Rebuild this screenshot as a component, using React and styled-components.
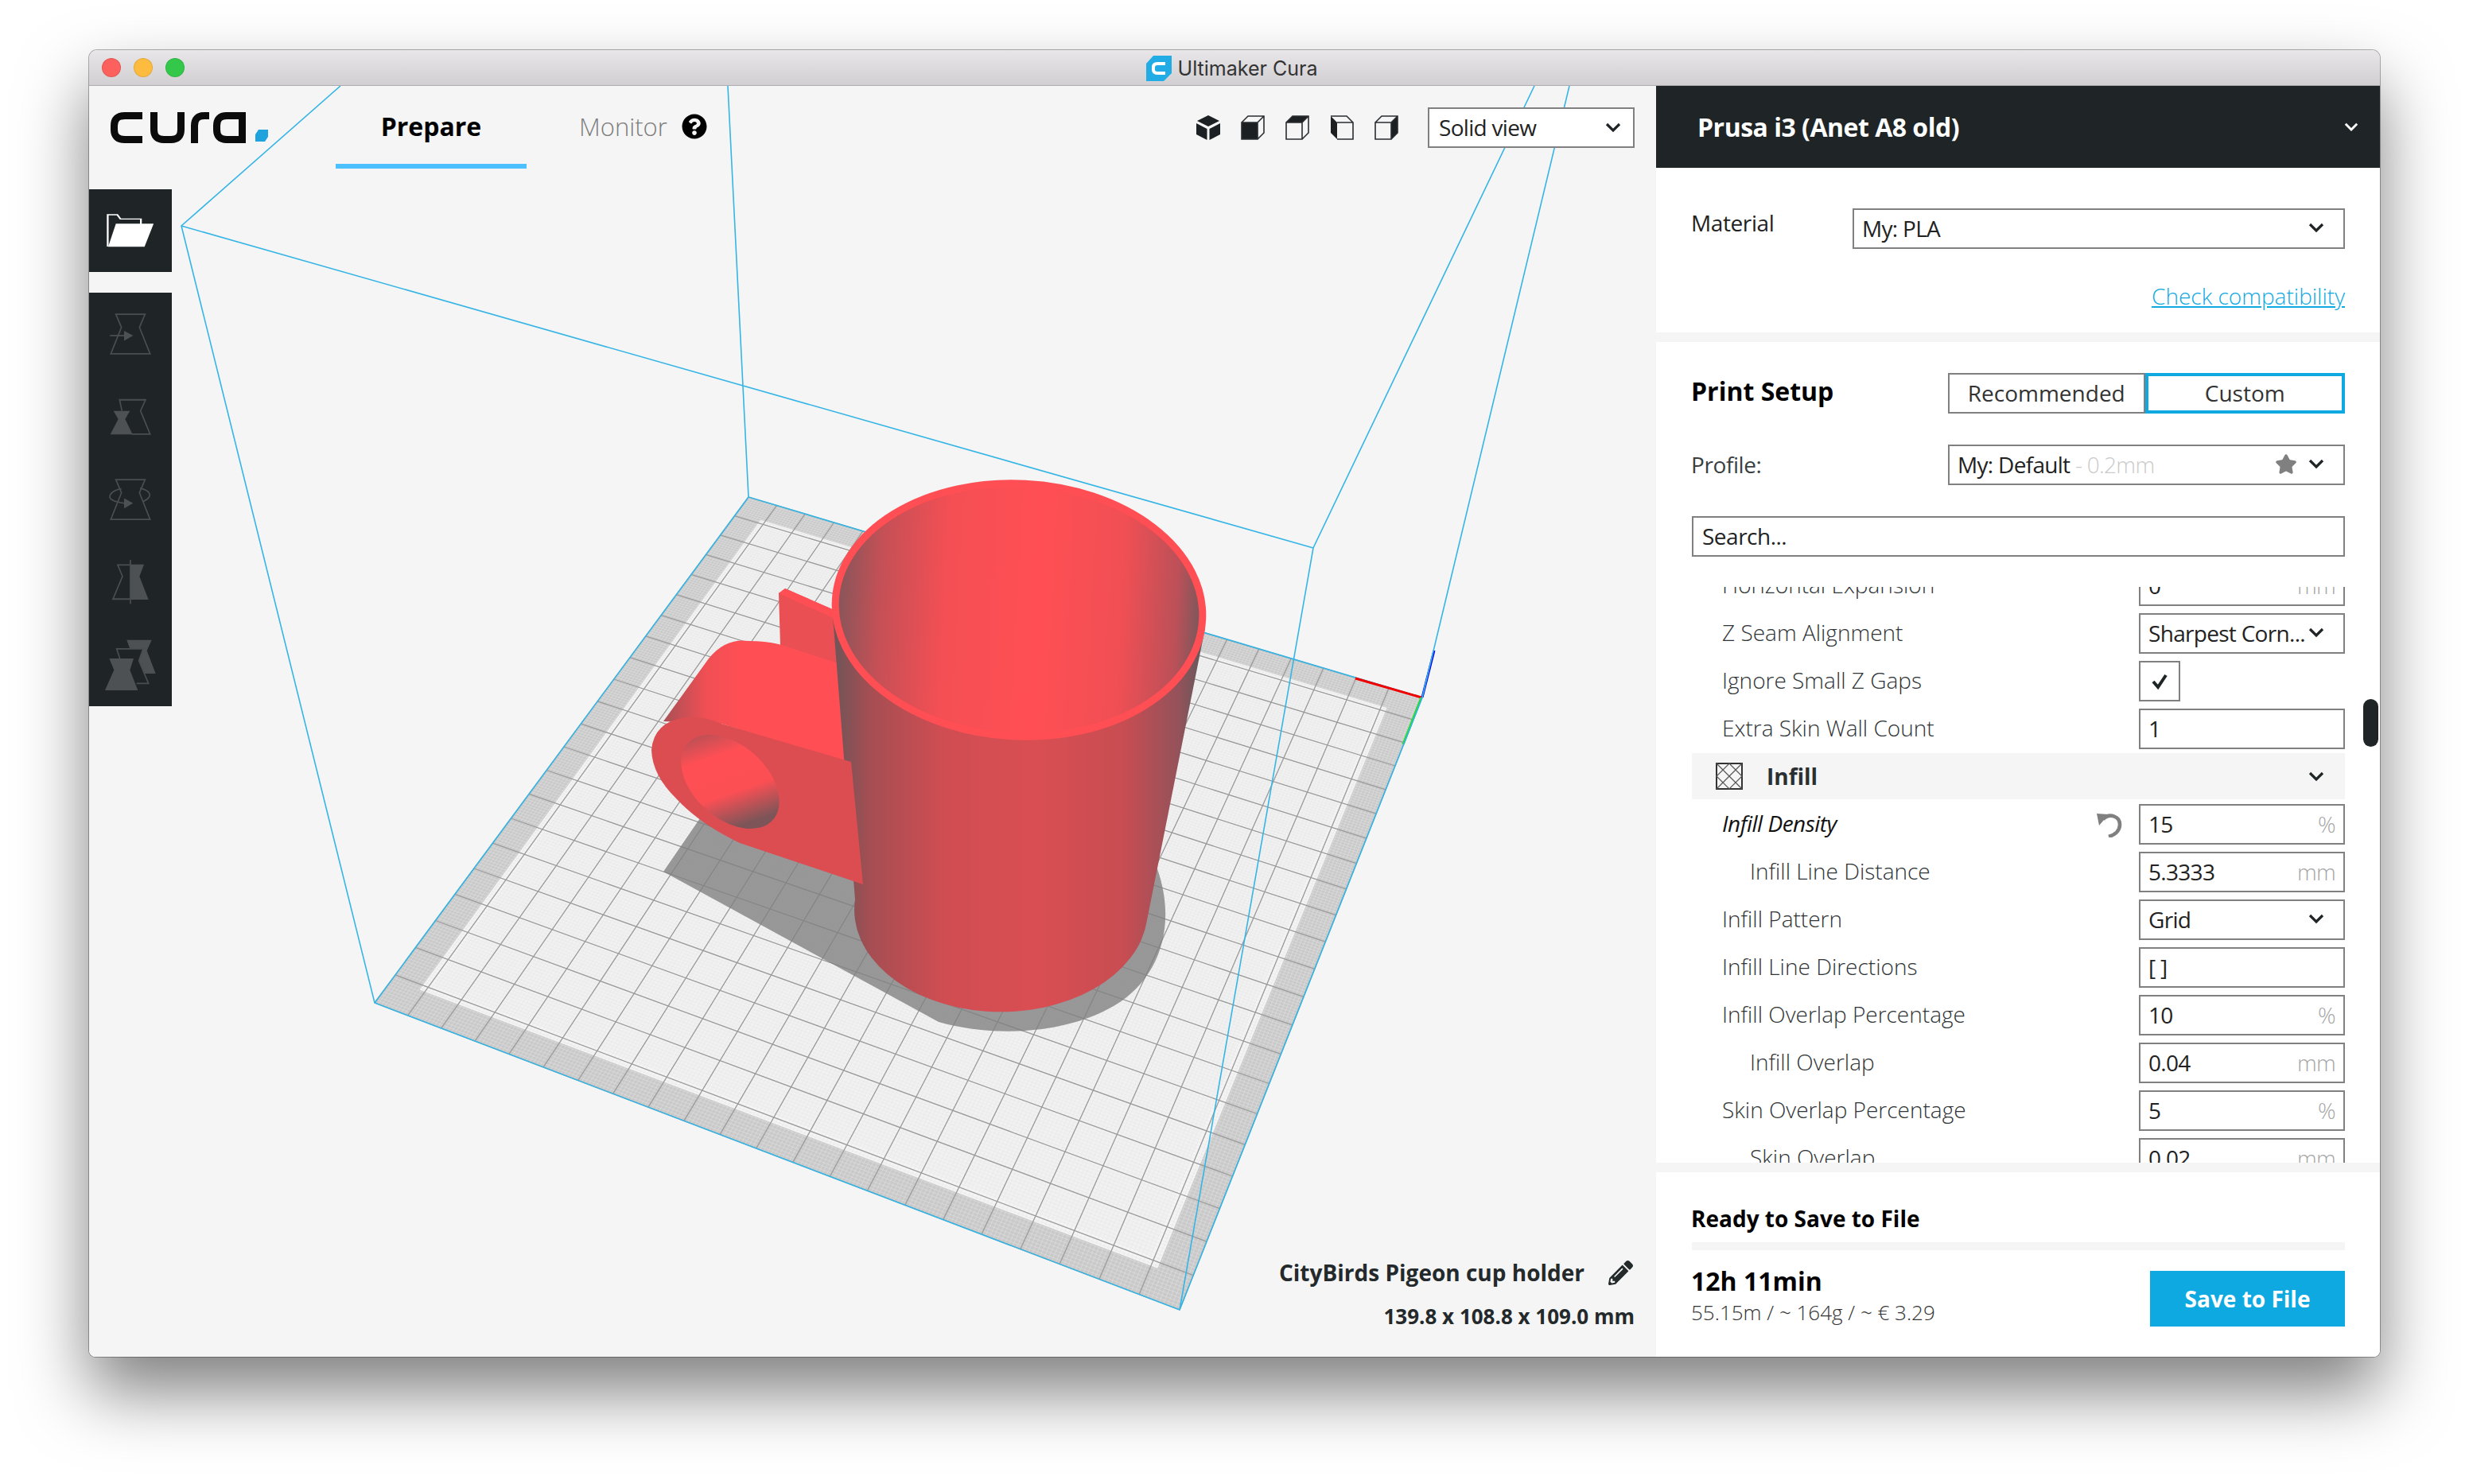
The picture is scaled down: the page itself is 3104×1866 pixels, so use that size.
import React from 'react';
import styled, { createGlobalStyle } from 'styled-components';
import { Star } from 'lucide-react';
import { FaPencilAlt, FaQuestionCircle } from 'react-icons/fa';

const GlobalStyle = createGlobalStyle`
  html, body { margin: 0; padding: 0; background: #fff; }
  * { box-sizing: border-box; }
  body { font-family: "Open Sans", "Liberation Sans", sans-serif; }
`;

const DARK = '#1f2527';
const BLUE = '#0fa9e2';
const FIELD_BORDER = '#808080';
const LINE = '#35b5e6';

const Page = styled.div`
  width: 3104px;
  height: 1866px;
  padding: 63px 0 0 112px;
  overflow: hidden;
`;

const Window = styled.div`
  width: 2880px;
  height: 1643px;
  display: flex;
  flex-direction: column;
  border-radius: 10px 10px 8px 8px;
  overflow: hidden;
  box-shadow: 0 0 0 1px rgba(0, 0, 0, 0.3), 0 44px 85px rgba(0, 0, 0, 0.5);
`;

const TitleBar = styled.div`
  height: 45px;
  flex: none;
  display: grid;
  grid-template-columns: 1fr auto 1fr;
  align-items: center;
  padding: 0 16px;
  background: linear-gradient(#e8e6e8, #d1cfd2);
  border-bottom: 1px solid #aeacae;
`;

const Lights = styled.div`
  display: flex;
  gap: 16px;
`;

const Light = styled.span`
  width: 24px;
  height: 24px;
  border-radius: 50%;
  background: ${p => p.$color};
  border: 1px solid rgba(0, 0, 0, 0.1);
`;

const TitleText = styled.div`
  display: flex;
  align-items: center;
  gap: 8px;
  margin-right: 7px;
  padding-top: 1px;
  font-family: Inter, "Liberation Sans", sans-serif;
  font-size: 25px;
  color: #333;
`;

const Main = styled.div`
  flex: 1;
  display: flex;
  min-height: 0;
`;

/* ---------- viewport ---------- */

const Viewport = styled.div`
  position: relative;
  flex: 1;
  display: flex;
  flex-direction: column;
  background: #f5f5f5;
`;

const Scene = styled.svg`
  position: absolute;
  inset: 0;
`;

const TopBar = styled.div`
  position: relative;
  height: 104px;
  flex: none;
  display: flex;
  align-items: center;
  padding: 0 27px;
`;

const LogoBox = styled.svg`
  width: 198px;
  height: 39px;
  flex: none;
  margin-right: 85px;
`;

const Tab = styled.div`
  width: 240px;
  height: 104px;
  flex: none;
  display: flex;
  align-items: center;
  justify-content: center;
  padding-top: 3px;
  border-bottom: 6px solid #4dc1ff;
  font-size: 32px;
  font-weight: 700;
  color: #000;
`;

const MonitorTab = styled.div`
  display: flex;
  align-items: center;
  gap: 18px;
  margin-left: 66px;
  margin-bottom: 2px;
  font-size: 31px;
  font-weight: 300;
  color: #7d7d7d;
  svg { color: #000; }
`;

const ViewIcons = styled.div`
  display: flex;
  gap: 26px;
  margin-left: auto;
  margin-right: 37px;
`;

const ViewSelect = styled.div`
  width: 260px;
  height: 51px;
  display: flex;
  align-items: center;
  justify-content: space-between;
  padding: 0 15px 0 12px;
  background: #fff;
  border: 2px solid ${FIELD_BORDER};
  font-size: 28px;
  letter-spacing: -0.7px;
  color: #222;
`;

const ToolColumn = styled.div`
  position: relative;
  width: 104px;
  margin-top: 26px;
  display: flex;
  flex-direction: column;
  gap: 26px;
`;

const ToolStack = styled.div`
  display: flex;
  flex-direction: column;
`;

const ToolButton = styled.div`
  width: 104px;
  height: 104px;
  background: ${DARK};
  svg { display: block; }
`;

const ModelInfo = styled.div`
  position: relative;
  margin-top: auto;
  padding: 0 27px 33px 0;
  display: flex;
  flex-direction: column;
  align-items: flex-end;
  gap: 18px;
  font-weight: 700;
  color: #24292b;
`;

const ModelName = styled.div`
  display: flex;
  align-items: center;
  gap: 30px;
  font-size: 28px;
  svg { margin-right: 2px; }
`;

const ModelSize = styled.div`
  font-size: 26px;
`;

/* ---------- sidebar ---------- */

const Sidebar = styled.div`
  width: 910px;
  flex: none;
  display: flex;
  flex-direction: column;
  background: #fff;
  font-size: 28px;
  color: #3a3f41;
`;

const SideHeader = styled.div`
  height: 103px;
  flex: none;
  display: flex;
  align-items: center;
  justify-content: space-between;
  padding: 0 27px 0 52px;
  background: ${DARK};
  color: #fff;
  font-size: 32px;
  font-weight: 700;
  letter-spacing: -0.5px;
`;

const MaterialBlock = styled.div`
  height: 207px;
  flex: none;
  display: flex;
  flex-direction: column;
  padding: 51px 44px 0 45px;
`;

const MaterialRow = styled.div`
  display: flex;
  align-items: flex-start;
  justify-content: space-between;
`;

const MaterialLabel = styled.span`
  margin-left: -1px;
  line-height: 36px;
  letter-spacing: -0.4px;
  color: #222;
`;

const CompatLink = styled.a`
  align-self: flex-end;
  margin-top: 40px;
  font-size: 28px;
  font-weight: 300;
  color: ${BLUE};
  text-decoration: underline;
`;

const Band = styled.div`
  height: 12px;
  flex: none;
  background: #f5f5f5;
`;

const SetupBlock = styled.div`
  flex: none;
  display: flex;
  flex-direction: column;
  gap: 39px;
  padding: 39px 44px 38px 45px;
`;

const SetupRow = styled.div`
  display: flex;
  align-items: center;
  justify-content: space-between;
`;

const SetupTitle = styled.span`
  margin-left: -1px;
  padding-bottom: 6px;
  font-size: 32px;
  font-weight: 700;
  color: #000;
`;

const ProfileLabel = styled.span`
  margin-left: -1px;
  padding-bottom: 2px;
  letter-spacing: -0.4px;
`;

const ModeTabs = styled.div`
  width: 499px;
  height: 51px;
  display: flex;
`;

const ModeTab = styled.div`
  flex: 1;
  display: flex;
  align-items: center;
  justify-content: center;
  padding-bottom: 2px;
  border: ${p => (p.$active ? `4px solid ${BLUE}` : `2px solid ${FIELD_BORDER}`)};
  color: #333;
`;

const SelectBox = styled.div`
  width: ${p => p.$width}px;
  height: 51px;
  flex: none;
  display: flex;
  align-items: center;
  gap: 6px;
  padding: 0 24px 2px 10px;
  border: 2px solid ${FIELD_BORDER};
  letter-spacing: -0.7px;
  color: #222;
`;

const SelectText = styled.span`
  flex: 1;
  min-width: 0;
  white-space: nowrap;
`;

const Dim = styled.span`
  color: #cacaca;
  font-weight: 300;
`;

const StarMark = styled(Star)`
  margin-right: 8px;
  flex: none;
`;

const SearchBox = styled.div`
  height: 51px;
  display: flex;
  align-items: center;
  padding: 0 11px 2px;
  border: 2px solid ${FIELD_BORDER};
  letter-spacing: -0.5px;
  color: #222;
`;

const ScrollArea = styled.div`
  position: relative;
  flex: 1;
  min-height: 0;
  overflow: hidden;
  padding: 0 44px 0 45px;
`;

const ScrollThumb = styled.div`
  position: absolute;
  top: 141px;
  right: 2px;
  width: 19px;
  height: 60px;
  border-radius: 10px;
  background: ${DARK};
`;

const SettingList = styled.div`
  display: flex;
  flex-direction: column;
  gap: 9px;
  margin-top: -27px;
`;

const SettingRow = styled.div`
  height: 51px;
  flex: none;
  display: flex;
  align-items: center;
  padding-left: ${p => (p.$indent ? 73 : 38)}px;
`;

const SettingLabel = styled.span`
  flex: 1;
  padding-bottom: 3px;
  font-style: ${p => (p.$italic ? 'italic' : 'normal')};
  font-weight: ${p => (p.$italic ? 400 : 300)};
  letter-spacing: ${p => (p.$italic ? '-0.5px' : '0')};
  color: ${p => (p.$italic ? '#111' : '#2f3436')};
`;

const ResetIcon = styled.svg`
  width: 32px;
  height: 32px;
  margin-right: 21px;
`;

const Field = styled.div`
  width: 259px;
  height: 51px;
  flex: none;
  display: flex;
  align-items: center;
  justify-content: space-between;
  padding: 0 10px 2px 10px;
  border: 2px solid ${FIELD_BORDER};
  letter-spacing: -0.7px;
  color: #222;
`;

const Unit = styled.span`
  color: #a6a6a6;
  font-weight: 300;
`;

const CheckBox = styled.div`
  width: 52px;
  height: 51px;
  margin-right: 207px;
  flex: none;
  display: flex;
  align-items: center;
  justify-content: center;
  border: 2px solid ${FIELD_BORDER};
`;

const Category = styled.div`
  height: 58px;
  flex: none;
  margin: -4px 0 -3px;
  display: flex;
  align-items: center;
  padding: 0 26px 0 30px;
  background: #f5f5f5;
  font-weight: 700;
  color: #2a2f31;
`;

const CategoryName = styled.span`
  flex: 1;
  margin-left: 30px;
`;

const FooterBlock = styled.div`
  height: 232px;
  flex: none;
  display: flex;
  flex-direction: column;
  padding: 38px 44px 0 45px;
`;

const ReadyTitle = styled.div`
  height: 40px;
  margin-left: -1px;
  line-height: 40px;
  font-size: 28px;
  font-weight: 700;
  color: #000;
`;

const FooterRule = styled.div`
  height: 10px;
  margin-top: 10px;
  background: #f5f5f5;
`;

const FooterRow = styled.div`
  display: flex;
  align-items: flex-start;
  justify-content: space-between;
  margin-top: 18px;
`;

const PrintTime = styled.div`
  margin-left: -1px;
  font-size: 32px;
  line-height: 42px;
  font-weight: 700;
  color: #000;
`;

const PrintCost = styled.div`
  margin-left: -1px;
  font-size: 26px;
  line-height: 36px;
  font-weight: 300;
  color: #333;
`;

const SaveButton = styled.div`
  width: 245px;
  height: 70px;
  margin-top: 8px;
  display: flex;
  align-items: center;
  justify-content: center;
  background: ${BLUE};
  color: #fff;
  font-size: 28px;
  font-weight: 700;
`;

/* ---------- little drawings ---------- */

const Chevron = ({ color = DARK, size = 20 }) => (
  <svg width={size} height={size * 0.62} viewBox="0 0 20 12.4" style={{ flex: 'none' }}>
    <path d="M2 2 L10 10 L18 2" fill="none" stroke={color} strokeWidth="3.2" />
  </svg>
);

const Logo = () => (
  <LogoBox viewBox="139 140 198 39" role="img" aria-label="cura logo">
    <g fill="none" stroke="#0b0b0b" strokeWidth="9">
      <path d="M179 144.5 H157 Q143.5 144.5 143.5 157 V162 Q143.5 174.5 157 174.5 H179" />
      <path d="M193.5 140 V162 Q193.5 174.5 206 174.5 H215 Q227.5 174.5 227.5 162 V140" />
      <path d="M244.5 179 V157 Q244.5 144.5 257 144.5 H263" />
      <path d="M304.5 179 V144.5 H285 Q272.5 144.5 272.5 157 V162 Q272.5 174.5 285 174.5 H304" />
    </g>
    <polygon points="325,162 337,162 337,171 333,177 321,177 321,168" fill="#1fa3de" />
  </LogoBox>
);

const AppIcon = () => (
  <svg width="32" height="32" viewBox="0 0 32 32" style={{ flex: 'none' }}>
    <polygon points="9,0 32,0 32,22 22,32 0,32 0,10" fill="#22ace6" />
    <path d="M24 10 H14 Q9 10 9 14.5 V17.5 Q9 22 14 22 H24" fill="none" stroke="#fff" strokeWidth="4" />
  </svg>
);

const ViewIcon = ({ kind }) => {
  const ink = '#1c2022';
  const line = { fill: 'none', stroke: '#2a2e30', strokeWidth: 1.6 };
  if (kind === 'iso') {
    return (
      <svg width="30" height="31" viewBox="0 0 30 31">
        <polygon points="15,0 29,7 15,14 1,7" fill={ink} />
        <polygon points="0,10 13.5,17 13.5,31 0,24" fill={ink} />
        <polygon points="30,10 16.5,17 16.5,31 30,24" fill={ink} />
      </svg>
    );
  }
  const solid = {
    front: '1,9 21,9 21,30 1,30',
    top: '1,9 9,1 29,1 21,9',
    left: '1,1 9,9 9,30 1,22',
    right: '21,9 29,1 29,22 21,30',
  }[kind];
  return (
    <svg width="30" height="31" viewBox="0 0 30 31">
      <polygon points={solid} fill={ink} />
      {kind === 'left' ? (
        <path d="M1 1 H21 L29 9 V30 H9 M9 9 H29" {...line} />
      ) : (
        <path d="M1 9 H21 V30 H1 Z M1 9 L9 1 H29 V22 L21 30 M21 9 L29 1" {...line} />
      )}
    </svg>
  );
};

const OpenIcon = () => (
  <svg width="104" height="104" viewBox="38 594 182 312" preserveAspectRatio="none">
    <path d="M79 810 V690 H100 L107 706 H152 V726" fill="none" stroke="#fff" strokeWidth="4" />
    <polygon points="97,724 180,724 160,811 80,811" fill="#fff" />
  </svg>
);

// coordinates follow the toolbar strip, one 291 unit tall cell per button
const toolStroke = { fill: 'none', stroke: '#4a4e50', strokeWidth: 5 };
const toolFill = { fill: '#4d5153' };

const ToolIcon = ({ index, children }) => (
  <svg width="104" height="104" viewBox={`36 ${50 + index * 291} 312 291`} preserveAspectRatio="none">
    {children}
  </svg>
);

const toolDrawings = [
  <>
    <path d="M137 126 H247 L226 172 L266 265 H118 L158 172 Z" {...toolStroke} />
    <path d="M115 201 H172" {...toolStroke} />
    <polygon points="168,184 202,201 168,219" {...toolFill} />
  </>,
  <>
    <path d="M160 466 L151 427 H249 L230 466 L266 548 H197" {...toolStroke} />
    <polygon points="128,466 190,466 172,495 200,549 116,549 146,495" {...toolFill} />
  </>,
  <>
    <path d="M137 708 H247 L226 754 L266 848 H118 L158 754 Z" {...toolStroke} />
    <path d="M158 740 C120 745 100 770 125 780 C135 786 150 788 172 791 M228 738 C262 745 285 765 240 785" {...toolStroke} />
    <polygon points="168,773 202,791 168,809" {...toolFill} />
  </>,
  <>
    <path d="M190 1008 H144 L162 1048 L126 1128 H190" {...toolStroke} />
    <polygon points="190,1006 243,1006 226,1048 260,1130 190,1130" {...toolFill} />
    <path d="M192 990 V1145" {...toolStroke} />
  </>,
  <>
    <polygon points="178,1272 272,1272 254,1310 287,1390 245,1390 225,1345 240,1303 190,1303" {...toolFill} />
    <path d="M152 1337 L140 1303 H240 L224 1345 L260 1425 H215" {...toolStroke} />
    <polygon points="112,1337 204,1337 190,1378 220,1449 96,1449 130,1378" {...toolFill} />
  </>,
];

const InfillIcon = () => (
  <svg width="34" height="34" viewBox="0 0 34 34" style={{ flex: 'none' }}>
    <rect x="1" y="1" width="32" height="32" fill="none" stroke="#333" strokeWidth="2" />
    <path d="M1 1 L33 33 M33 1 L1 33 M17 1 L33 17 L17 33 L1 17 Z" fill="none" stroke="#555" strokeWidth="1.2" />
  </svg>
);

/* ---------- build plate, computed with a plane homography ---------- */

const corners = { p00: [941, 625], p10: [1788, 877], p11: [1483, 1647], p01: [471, 1261] };

const makeHomography = ({ p00, p10, p11, p01 }) => {
  const dx1 = p10[0] - p11[0];
  const dx2 = p01[0] - p11[0];
  const dx3 = p00[0] - p10[0] + p11[0] - p01[0];
  const dy1 = p10[1] - p11[1];
  const dy2 = p01[1] - p11[1];
  const dy3 = p00[1] - p10[1] + p11[1] - p01[1];
  const det = dx1 * dy2 - dx2 * dy1;
  const g = (dx3 * dy2 - dx2 * dy3) / det;
  const h = (dx1 * dy3 - dx3 * dy1) / det;
  return (u, v) => {
    const w = g * u + h * v + 1;
    return [
      ((p10[0] - p00[0] + g * p10[0]) * u + (p01[0] - p00[0] + h * p01[0]) * v + p00[0]) / w,
      ((p10[1] - p00[1] + g * p10[1]) * u + (p01[1] - p00[1] + h * p01[1]) * v + p00[1]) / w,
    ];
  };
};

const project = makeHomography(corners);
const fmt = ([x, y]) => `${x.toFixed(1)} ${y.toFixed(1)}`;

const gridPath = cells => {
  let d = '';
  for (let i = 0; i <= cells; i++) {
    const t = i / cells;
    d += `M${fmt(project(t, 0))}L${fmt(project(t, 1))}M${fmt(project(0, t))}L${fmt(project(1, t))}`;
  }
  return d;
};

const inset = a =>
  [project(a, a), project(1 - a, a), project(1 - a, 1 - a), project(a, 1 - a)]
    .map(p => p.map(n => n.toFixed(1)).join(','))
    .join(' ');

const BuildScene = () => (
  <Scene width="1970" height="1598" viewBox="112 108 1970 1598">
    <defs>
      <linearGradient id="cupBody" x1="0" x2="1" y1="0" y2="0">
        <stop offset="0" stopColor="#6e5558" />
        <stop offset="0.1" stopColor="#a54e53" />
        <stop offset="0.3" stopColor="#d04d52" />
        <stop offset="0.55" stopColor="#d94e52" />
        <stop offset="0.78" stopColor="#c84d52" />
        <stop offset="0.93" stopColor="#94525a" />
        <stop offset="1" stopColor="#5f5a5c" />
      </linearGradient>
      <linearGradient id="cupInner" x1="0" x2="1" y1="0" y2="0">
        <stop offset="0" stopColor="#85565a" />
        <stop offset="0.12" stopColor="#c45056" />
        <stop offset="0.3" stopColor="#f44f54" />
        <stop offset="0.55" stopColor="#ff4f54" />
        <stop offset="0.78" stopColor="#f04f54" />
        <stop offset="0.93" stopColor="#bb5058" />
        <stop offset="1" stopColor="#75595c" />
      </linearGradient>
      <linearGradient id="lugTop" x1="0" x2="1" y1="0" y2="0">
        <stop offset="0" stopColor="#a85056" />
        <stop offset="0.22" stopColor="#f04f54" />
        <stop offset="0.4" stopColor="#ff4f54" />
      </linearGradient>
      <linearGradient id="hole" x1="0" x2="1" y1="0" y2="0.35">
        <stop offset="0" stopColor="#9a5055" />
        <stop offset="0.35" stopColor="#ff4f54" />
        <stop offset="0.7" stopColor="#fb4f54" />
        <stop offset="1" stopColor="#7d5558" />
      </linearGradient>
    </defs>

    {/* build plate */}
    <polygon points={inset(0)} fill="#c9c9c9" />
    <polygon points={inset(0.038)} fill="#f4f4f4" />
    <polygon points={inset(0.05)} fill="#f1f1f1" />
    <path d={gridPath(220)} fill="none" stroke="#e4e4e4" strokeWidth="0.5" />
    <path d={gridPath(22)} fill="none" stroke="#9a9a9a" strokeWidth="1.3" />

    {/* model shadow */}
    <path
      d="M834 1096 L880 1029 L1070 1080 L1454 1090 C1480 1160 1460 1230 1400 1265 C1340 1300 1250 1305 1180 1285 L1105 1244 Z"
      fill="#7f7f7f"
      fillOpacity="0.78"
    />

    {/* build volume back edges */}
    <path
      d="M915 108 L941 625 L1788 877 M941 625 L471 1261 M228 284 L1651 689"
      fill="none"
      stroke={LINE}
      strokeWidth="1.6"
    />

    {/* lug behind the cup */}
    <polygon points="979,746 987,740 1060,772 1060,840 981,812" fill="#ea4f54" />
    <polygon points="979,746 987,740 1060,772 1052,779" fill="#ff4f54" />
    <path d="M891 828 Q912 802 941 806 Q962 806 979 810 L1060 836 L1080 965 L907 910 L834 907 Z" fill="url(#lugTop)" />

    {/* cup */}
    <path d="M1047 775 L1075 1131 A184 128 0 0 0 1442 1157 L1515 790 Z" fill="url(#cupBody)" />
    <ellipse
      cx="1281"
      cy="767"
      rx="231"
      ry="159"
      transform="rotate(3 1281 767)"
      fill="url(#cupInner)"
      stroke="#ff4f54"
      strokeWidth="9"
    />

    {/* lug face sits slightly over the cup wall */}
    <path
      d="M819 943 Q822 908 861 902 Q885 900 907 910 L1070 958 L1085 1112 L930 1060 Q880 1036 851 1005 Q820 975 819 943 Z"
      fill="#dc4d52"
    />
    <ellipse cx="918" cy="983" rx="72" ry="46" transform="rotate(42 918 983)" fill="url(#hole)" />

    {/* axes */}
    <path d="M1704 853 L1787 877" stroke="#f00000" strokeWidth="3" />
    <path d="M1788 877 L1803 818" stroke="#0000f0" strokeWidth="3" />
    <path d="M1787 877 L1764 936" stroke="#22e022" strokeWidth="3" />

    {/* build volume front edges */}
    <path
      d={`M428 108 L228 284 L471 1261 L1483 1647 L1788 877 L1973 108 M1929 108 L1651 689 L1483 1647`}
      fill="none"
      stroke={LINE}
      strokeWidth="1.6"
    />
  </Scene>
);

/* ---------- data ---------- */

const settings = [
  { label: 'Horizontal Expansion', value: '0', unit: 'mm' },
  { label: 'Z Seam Alignment', select: 'Sharpest Corn...' },
  { label: 'Ignore Small Z Gaps', check: true },
  { label: 'Extra Skin Wall Count', value: '1' },
  { category: 'Infill' },
  { label: 'Infill Density', value: '15', unit: '%', italic: true, reset: true },
  { label: 'Infill Line Distance', value: '5.3333', unit: 'mm', indent: true },
  { label: 'Infill Pattern', select: 'Grid' },
  { label: 'Infill Line Directions', value: '[ ]' },
  { label: 'Infill Overlap Percentage', value: '10', unit: '%' },
  { label: 'Infill Overlap', value: '0.04', unit: 'mm', indent: true },
  { label: 'Skin Overlap Percentage', value: '5', unit: '%' },
  { label: 'Skin Overlap', value: '0.02', unit: 'mm', indent: true },
];

const Setting = ({ item }) => {
  if (item.category) {
    return (
      <Category>
        <InfillIcon />
        <CategoryName>{item.category}</CategoryName>
        <Chevron />
      </Category>
    );
  }
  return (
    <SettingRow $indent={item.indent}>
      <SettingLabel $italic={item.italic}>{item.label}</SettingLabel>
      {item.reset && (
        <ResetIcon viewBox="0 0 32 32">
          <path d="M8 9 C16 1 29 5 29 16 C29 24 22 29 15 31" fill="none" stroke="#808080" strokeWidth="4.6" />
          <polygon points="0,2 15,3 3,17" fill="#808080" />
        </ResetIcon>
      )}
      {item.check && (
        <CheckBox>
          <svg width="22" height="22" viewBox="0 0 22 22">
            <path d="M3 11 L9 18 L19 3" fill="none" stroke={DARK} strokeWidth="4" />
          </svg>
        </CheckBox>
      )}
      {item.select && (
        <SelectBox $width={259}>
          <SelectText>{item.select}</SelectText>
          <Chevron />
        </SelectBox>
      )}
      {item.value !== undefined && (
        <Field>
          <span>{item.value}</span>
          {item.unit && <Unit>{item.unit}</Unit>}
        </Field>
      )}
    </SettingRow>
  );
};

export default function App() {
  return (
    <Page>
      <GlobalStyle />
      <Window>
        <TitleBar>
          <Lights>
            <Light $color="#fc615d" />
            <Light $color="#fdbc40" />
            <Light $color="#34c84a" />
          </Lights>
          <TitleText>
            <AppIcon />
            Ultimaker Cura
          </TitleText>
        </TitleBar>
        <Main>
          <Viewport>
            <BuildScene />
            <TopBar>
              <Logo />
              <Tab>Prepare</Tab>
              <MonitorTab>
                Monitor
                <FaQuestionCircle size={32} />
              </MonitorTab>
              <ViewIcons>
                {['iso', 'front', 'top', 'left', 'right'].map(kind => (
                  <ViewIcon key={kind} kind={kind} />
                ))}
              </ViewIcons>
              <ViewSelect>
                Solid view
                <Chevron />
              </ViewSelect>
            </TopBar>
            <ToolColumn>
              <ToolButton>
                <OpenIcon />
              </ToolButton>
              <ToolStack>
                {toolDrawings.map((drawing, i) => (
                  <ToolButton key={i}>
                    <ToolIcon index={i}>{drawing}</ToolIcon>
                  </ToolButton>
                ))}
              </ToolStack>
            </ToolColumn>
            <ModelInfo>
              <ModelName>
                CityBirds Pigeon cup holder
                <FaPencilAlt size={31} color="#24292b" />
              </ModelName>
              <ModelSize>139.8 x 108.8 x 109.0 mm</ModelSize>
            </ModelInfo>
          </Viewport>
          <Sidebar>
            <SideHeader>
              Prusa i3 (Anet A8 old)
              <Chevron color="#fff" size={18} />
            </SideHeader>
            <MaterialBlock>
              <MaterialRow>
                <MaterialLabel>Material</MaterialLabel>
                <SelectBox $width={619}>
                  <SelectText>My: PLA</SelectText>
                  <Chevron />
                </SelectBox>
              </MaterialRow>
              <CompatLink>Check compatibility</CompatLink>
            </MaterialBlock>
            <Band />
            <SetupBlock>
              <SetupRow>
                <SetupTitle>Print Setup</SetupTitle>
                <ModeTabs>
                  <ModeTab>Recommended</ModeTab>
                  <ModeTab $active>Custom</ModeTab>
                </ModeTabs>
              </SetupRow>
              <SetupRow>
                <ProfileLabel>Profile:</ProfileLabel>
                <SelectBox $width={499}>
                  <SelectText>
                    My: Default <Dim>- 0.2mm</Dim>
                  </SelectText>
                  <StarMark size={28} fill="#808080" color="#808080" />
                  <Chevron />
                </SelectBox>
              </SetupRow>
              <SearchBox>Search...</SearchBox>
            </SetupBlock>
            <ScrollArea>
              <SettingList>
                {settings.map(item => (
                  <Setting key={item.label || item.category} item={item} />
                ))}
              </SettingList>
              <ScrollThumb />
            </ScrollArea>
            <Band />
            <FooterBlock>
              <ReadyTitle>Ready to Save to File</ReadyTitle>
              <FooterRule />
              <FooterRow>
                <div>
                  <PrintTime>12h 11min</PrintTime>
                  <PrintCost>55.15m / ~ 164g / ~ € 3.29</PrintCost>
                </div>
                <SaveButton>Save to File</SaveButton>
              </FooterRow>
            </FooterBlock>
          </Sidebar>
        </Main>
      </Window>
    </Page>
  );
}
